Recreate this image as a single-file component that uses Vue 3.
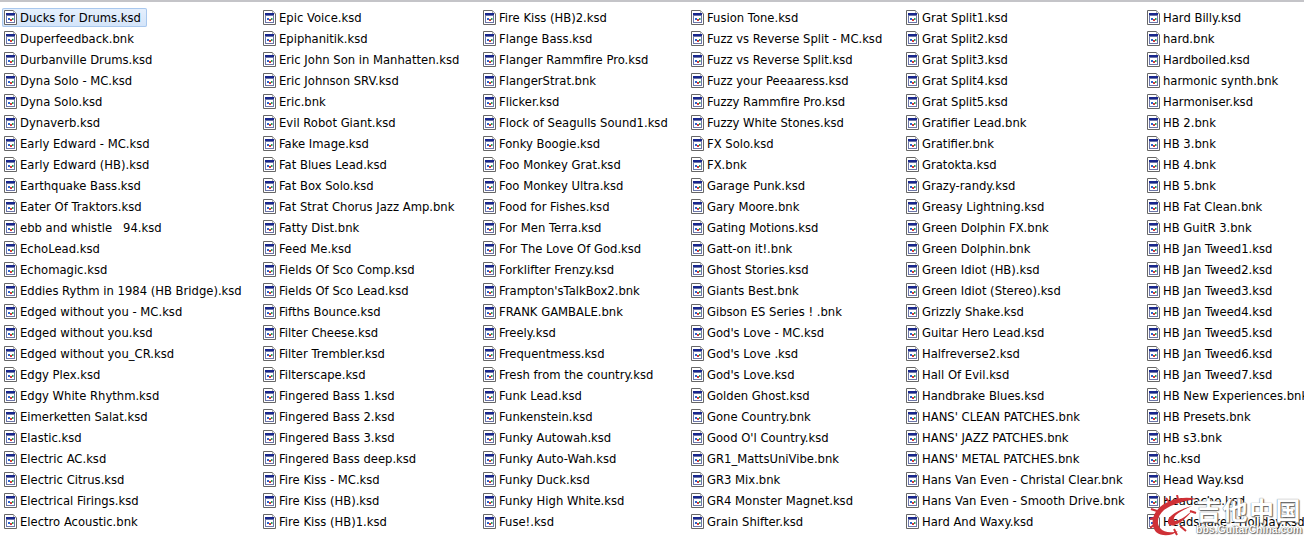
<template>
  <div class="page">
    <div class="columns">
      <ul v-for="(col, i) in columns" :key="i" class="col">
        <li v-for="(name, j) in col" :key="j" class="file" :class="{ selected: i === 0 && j === 0 }">
          <svg class="icon" width="13" height="15" viewBox="0 0 13 15">
            <path d="M0.5 0.5H9.5L12.5 3.5V14.5H0.5Z" fill="#fff" stroke="#666" />
            <path d="M9.5 0.5V3.5H12.5" fill="#e8e8e8" stroke="#aaa" />
            <rect x="2" y="3" width="9" height="2" fill="#18268c" />
            <rect x="2.5" y="5.5" width="8" height="7" fill="#fff" stroke="#6c76a8" />
            <rect x="4" y="8" width="2" height="2" fill="#2a62cc" />
            <rect x="6" y="9" width="2" height="2" fill="#d23c3c" />
            <rect x="8" y="8" width="1.5" height="2" fill="#2c9a58" />
          </svg>
          <span class="name">{{ name }}</span>
        </li>
      </ul>
    </div>
    <div class="mark">
      <svg class="logo" width="48" height="42" viewBox="0 0 48 42">
        <path d="M46 4C34 1 20 4 10 12C2 19 0 30 6 37C12 42 22 41 28 36C22 38 14 38 10 33C6 28 8 20 14 15C22 9 34 6 46 4Z" fill="#cf3036" />
        <path d="M42 11C34 13 24 17 19 23C16 28 19 32 25 30C31 28 37 22 42 16C37 20 31 25 26 26C23 26 23 23 26 20C30 16 36 14 42 11Z" fill="#cf3036" />
        <path d="M7 16L1 14M4 23L0 24M4 30L0 33M19 7L16 3M28 4L27 0M40 16L46 18M30 31L36 36M24 34L27 40" stroke="#cf3036" stroke-width="2" fill="none" />
      </svg>
      <div class="brand">
        <div class="brand-cn">吉他中国</div>
        <div class="brand-en">bbs.GuitarChina.com</div>
      </div>
    </div>
  </div>
</template>

<script setup>
const columns = [
  ['Ducks for Drums.ksd', 'Duperfeedback.bnk', 'Durbanville Drums.ksd', 'Dyna Solo - MC.ksd', 'Dyna Solo.ksd', 'Dynaverb.ksd', 'Early Edward - MC.ksd', 'Early Edward (HB).ksd', 'Earthquake Bass.ksd', 'Eater Of Traktors.ksd', 'ebb and whistle   94.ksd', 'EchoLead.ksd', 'Echomagic.ksd', 'Eddies Rythm in 1984 (HB Bridge).ksd', 'Edged without you - MC.ksd', 'Edged without you.ksd', 'Edged without you_CR.ksd', 'Edgy Plex.ksd', 'Edgy White Rhythm.ksd', 'Eimerketten Salat.ksd', 'Elastic.ksd', 'Electric AC.ksd', 'Electric Citrus.ksd', 'Electrical Firings.ksd', 'Electro Acoustic.bnk'],
  ['Epic Voice.ksd', 'Epiphanitik.ksd', 'Eric John Son in Manhatten.ksd', 'Eric Johnson SRV.ksd', 'Eric.bnk', 'Evil Robot Giant.ksd', 'Fake Image.ksd', 'Fat Blues Lead.ksd', 'Fat Box Solo.ksd', 'Fat Strat Chorus Jazz Amp.bnk', 'Fatty Dist.bnk', 'Feed Me.ksd', 'Fields Of Sco Comp.ksd', 'Fields Of Sco Lead.ksd', 'Fifths Bounce.ksd', 'Filter Cheese.ksd', 'Filter Trembler.ksd', 'Filterscape.ksd', 'Fingered Bass 1.ksd', 'Fingered Bass 2.ksd', 'Fingered Bass 3.ksd', 'Fingered Bass deep.ksd', 'Fire Kiss - MC.ksd', 'Fire Kiss (HB).ksd', 'Fire Kiss (HB)1.ksd'],
  ['Fire Kiss (HB)2.ksd', 'Flange Bass.ksd', 'Flanger Rammfire Pro.ksd', 'FlangerStrat.bnk', 'Flicker.ksd', 'Flock of Seagulls Sound1.ksd', 'Fonky Boogie.ksd', 'Foo Monkey Grat.ksd', 'Foo Monkey Ultra.ksd', 'Food for Fishes.ksd', 'For Men Terra.ksd', 'For The Love Of God.ksd', 'Forklifter Frenzy.ksd', "Frampton'sTalkBox2.bnk", 'FRANK GAMBALE.bnk', 'Freely.ksd', 'Frequentmess.ksd', 'Fresh from the country.ksd', 'Funk Lead.ksd', 'Funkenstein.ksd', 'Funky Autowah.ksd', 'Funky Auto-Wah.ksd', 'Funky Duck.ksd', 'Funky High White.ksd', 'Fuse!.ksd'],
  ['Fusion Tone.ksd', 'Fuzz vs Reverse Split - MC.ksd', 'Fuzz vs Reverse Split.ksd', 'Fuzz your Peeaaress.ksd', 'Fuzzy Rammfire Pro.ksd', 'Fuzzy White Stones.ksd', 'FX Solo.ksd', 'FX.bnk', 'Garage Punk.ksd', 'Gary Moore.bnk', 'Gating Motions.ksd', 'Gatt-on it!.bnk', 'Ghost Stories.ksd', 'Giants Best.bnk', 'Gibson ES Series ! .bnk', "God's Love - MC.ksd", "God's Love .ksd", "God's Love.ksd", 'Golden Ghost.ksd', 'Gone Country.bnk', "Good O'l Country.ksd", 'GR1_MattsUniVibe.bnk', 'GR3 Mix.bnk', 'GR4 Monster Magnet.ksd', 'Grain Shifter.ksd'],
  ['Grat Split1.ksd', 'Grat Split2.ksd', 'Grat Split3.ksd', 'Grat Split4.ksd', 'Grat Split5.ksd', 'Gratifier Lead.bnk', 'Gratifier.bnk', 'Gratokta.ksd', 'Grazy-randy.ksd', 'Greasy Lightning.ksd', 'Green Dolphin FX.bnk', 'Green Dolphin.bnk', 'Green Idiot (HB).ksd', 'Green Idiot (Stereo).ksd', 'Grizzly Shake.ksd', 'Guitar Hero Lead.ksd', 'Halfreverse2.ksd', 'Hall Of Evil.ksd', 'Handbrake Blues.ksd', "HANS' CLEAN PATCHES.bnk", "HANS' JAZZ PATCHES.bnk", "HANS' METAL PATCHES.bnk", 'Hans Van Even - Christal Clear.bnk', 'Hans Van Even - Smooth Drive.bnk', 'Hard And Waxy.ksd'],
  ['Hard Billy.ksd', 'hard.bnk', 'Hardboiled.ksd', 'harmonic synth.bnk', 'Harmoniser.ksd', 'HB 2.bnk', 'HB 3.bnk', 'HB 4.bnk', 'HB 5.bnk', 'HB Fat Clean.bnk', 'HB GuitR 3.bnk', 'HB Jan Tweed1.ksd', 'HB Jan Tweed2.ksd', 'HB Jan Tweed3.ksd', 'HB Jan Tweed4.ksd', 'HB Jan Tweed5.ksd', 'HB Jan Tweed6.ksd', 'HB Jan Tweed7.ksd', 'HB New Experiences.bnk', 'HB Presets.bnk', 'HB s3.bnk', 'hc.ksd', 'Head Way.ksd', 'Headache.ksd', 'Headshake - Holiday.ksd']
]
</script>

<style scoped>
.page {
  position: relative;
  width: 1304px;
  height: 545px;
  overflow: hidden;
  box-sizing: border-box;
  border-top: 2px solid #c4c4c8;
  background: #fff;
  font-family: "DejaVu Sans", sans-serif;
  font-size: 11.6px;
  color: #000;
}
.columns {
  display: grid;
  grid-template-columns: 259px 220px 208px 215px 241px 159px;
  padding: 6px 0 0 2px;
}
.col {
  list-style: none;
  margin: 0;
  padding: 0;
  min-width: 0;
}
.file {
  display: flex;
  align-items: center;
  gap: 3px;
  box-sizing: border-box;
  width: fit-content;
  height: 19px;
  margin-bottom: 2px;
  padding: 0 6px 0 2px;
  white-space: pre;
}
.selected {
  background: linear-gradient(#e6f0fd, #d3e4f9);
  box-shadow: inset 0 0 0 1px #a9c8ee;
  border-radius: 2px;
}
.icon {
  flex: none;
}
.mark {
  position: absolute;
  left: 1150px;
  top: 493px;
  display: flex;
  align-items: flex-start;
}
.logo {
  flex: none;
}
.brand {
  margin-left: -2px;
  color: #fff;
  font-family: "Noto Sans CJK SC", sans-serif;
  text-shadow: 0 0 1px #444, 1px 1px 1px #666;
}
.brand-cn {
  font-size: 25px;
  font-weight: 700;
  line-height: 28px;
  letter-spacing: 1.5px;
}
.brand-en {
  font-family: "Liberation Sans", sans-serif;
  font-size: 10.5px;
  font-weight: 700;
  line-height: 13px;
}
</style>
